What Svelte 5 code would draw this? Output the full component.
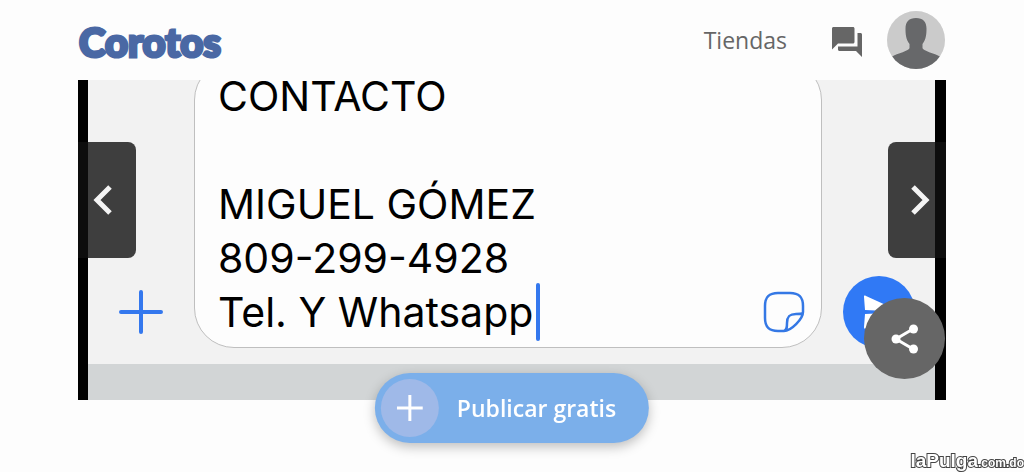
<script lang="ts">
	interface Line {
		text: string;
		caret?: boolean;
	}

	const lines: Line[] = [
		{ text: 'CONTACTO' },
		{ text: '' },
		{ text: 'MIGUEL GÓMEZ' },
		{ text: '809-299-4928' },
		{ text: 'Tel. Y Whatsapp', caret: true }
	];
</script>

<header>
	<a class="logo" href="#inicio">Corotos</a>
	<nav>
		<a class="stores" href="#tiendas">Tiendas</a>
		<a class="chat" href="#mensajes" aria-label="Mensajes">
			<svg viewBox="2 2 20 20" width="30" height="30" aria-hidden="true">
				<path
					fill="#666"
					d="M21 6h-2v9H6v2c0 .55.45 1 1 1h11l4 4V7c0-.55-.45-1-1-1zm-4 6V3c0-.55-.45-1-1-1H3c-.55 0-1 .45-1 1v14l4-4h10c.55 0 1-.45 1-1z"
				/>
			</svg>
		</a>
		<button class="avatar" aria-label="Mi cuenta">
			<svg viewBox="0 0 58 58" width="58" height="58" aria-hidden="true">
				<rect width="58" height="58" fill="#cbcbcb" />
				<path
					fill="#67686a"
					d="M29 7c-7 0-10.500 4-10.500 10.500 0 6 .5 11 4 15.500v4c0 3-12 5-18 9v12h49V46c-6-4-18-6-18-9v-4c3.500-4.500 4-9.500 4-15.500C39.500 11 36 7 29 7z"
				/>
			</svg>
		</button>
	</nav>
</header>

<main class="gallery">
	<figure>
		<div class="composer">
			<div class="side">
				<svg viewBox="0 0 44 44" width="44" height="44" aria-hidden="true">
					<path d="M22 2v40M2 22h40" stroke="#3478ee" stroke-width="4" stroke-linecap="round" />
				</svg>
			</div>
			<div class="bubble">
				<div class="message">
					{#each lines as line}
						<p>
							{line.text}
							{#if line.caret}<span class="caret"></span>{/if}
						</p>
					{/each}
				</div>
				<svg class="sticker" viewBox="0 0 42 42" width="42" height="42" aria-hidden="true">
					<path
						d="M15 2h12c9 0 13 4 13 13v6c0 7-12 19-19 19h-6C6 40 2 36 2 27V15C2 6 6 2 15 2z M40 22c-1 1-3 1-7 1-7 0-9 3-9 9 0 4 0 7-3 8"
						fill="none"
						stroke="#3478e5"
						stroke-width="2.500"
						stroke-linejoin="round"
					/>
				</svg>
			</div>
			<div class="side">
				<svg viewBox="0 0 72 72" width="72" height="72" aria-hidden="true">
					<circle cx="36" cy="36" r="36" fill="#3079f5" />
					<path fill="#fff" d="M23 20c-2-1-2 0-2 1l1 13 22 1v2l-22 1-1 13c0 2 1 2 2 1l33-15c1-1 1-1 0-2z" />
				</svg>
			</div>
		</div>
		<div class="keyboard"></div>
	</figure>

	<button class="arrow prev" aria-label="Anterior">
		<svg viewBox="0 0 20 32" width="20" height="32" aria-hidden="true">
			<path d="M17 3L4 16l13 13" fill="none" stroke="#f4f4f4" stroke-width="5" />
		</svg>
	</button>
	<button class="arrow next" aria-label="Siguiente">
		<svg viewBox="0 0 20 32" width="20" height="32" aria-hidden="true">
			<path d="M3 3l13 13L3 29" fill="none" stroke="#f4f4f4" stroke-width="5" />
		</svg>
	</button>
	<button class="share" aria-label="Compartir">
		<svg viewBox="0 0 28 30" width="28" height="30" aria-hidden="true">
			<path d="M22 5L5 15l17 10" fill="none" stroke="#fff" stroke-width="3" />
			<g fill="#fff">
				<circle cx="22.500" cy="5" r="4.500" />
				<circle cx="5" cy="15" r="4.500" />
				<circle cx="22.500" cy="25" r="4.500" />
			</g>
		</svg>
	</button>
</main>

<button class="publish">
	<span class="plus">
		<svg viewBox="0 0 26 26" width="26" height="26" aria-hidden="true">
			<path d="M13 0v26M0 13h26" stroke="#fff" stroke-width="3" />
		</svg>
	</span>
	<span>Publicar gratis</span>
</button>

<div class="watermark">laPulga<small>.com.do</small></div>

<style>
	:global(body) {
		background: #fdfdfd;
		font-family: 'Open Sans', sans-serif;
	}

	button {
		padding: 0;
		border: 0;
		font: inherit;
		cursor: pointer;
	}

	svg {
		display: block;
	}

	a {
		color: inherit;
		text-decoration: none;
	}

	header {
		display: flex;
		align-items: center;
		justify-content: space-between;
		height: 80px;
		padding: 0 79px;
	}

	.logo {
		padding-top: 4px;
		color: #4a68a4;
		font: 900 40px/44px Lato, sans-serif;
		-webkit-text-stroke: 3px #4a68a4;
	}

	nav {
		display: flex;
		align-items: center;
	}

	.stores {
		color: #666;
		font-size: 23px;
		line-height: 32px;
	}

	.chat {
		padding-top: 4px;
		margin: 0 25px 0 45px;
	}

	.avatar {
		overflow: hidden;
		border-radius: 50%;
	}

	.gallery {
		position: relative;
		height: 320px;
		margin: 0 78px;
		overflow: hidden;
	}

	figure {
		display: flex;
		flex-direction: column;
		justify-content: flex-end;
		box-sizing: border-box;
		height: 100%;
		margin: 0;
		padding: 0 11px 0 10px;
		background: #000;
	}

	.composer {
		display: grid;
		flex: none;
		grid-template-columns: 106px 1fr 113px;
		align-items: end;
		padding-bottom: 16px;
		background: #f2f2f2;
	}

	.side {
		display: flex;
		align-items: center;
		justify-content: center;
		height: 72px;
	}

	.bubble {
		display: flex;
		align-items: flex-end;
		justify-content: space-between;
		padding: 8px 16px 8px 23px;
		border: 1px solid #bfbfbf;
		border-radius: 40px;
		background: #fdfdfd;
	}

	.message {
		color: #000;
		font: 41px/54px Inter, sans-serif;
	}

	.message p {
		display: flex;
		align-items: center;
		gap: 3px;
		height: 54px;
		margin: 0;
		white-space: nowrap;
	}

	.caret {
		width: 4px;
		height: 58px;
		border-radius: 2px;
		background: #3478ee;
	}

	.sticker {
		margin-bottom: 6px;
	}

	.keyboard {
		flex: none;
		height: 36px;
		background: #d2d5d6;
	}

	.arrow {
		position: absolute;
		top: 62px;
		display: flex;
		align-items: center;
		box-sizing: border-box;
		width: 58px;
		height: 116px;
		background: rgb(16 16 16 / 80%);
	}

	.prev {
		left: 0;
		padding-left: 15px;
		border-radius: 0 8px 8px 0;
	}

	.next {
		right: 0;
		justify-content: flex-end;
		padding-right: 16px;
		border-radius: 8px 0 0 8px;
	}

	.share {
		position: absolute;
		right: 1px;
		bottom: 21px;
		display: flex;
		align-items: center;
		justify-content: center;
		width: 81px;
		height: 81px;
		border-radius: 50%;
		background: #666;
	}

	.publish {
		position: fixed;
		bottom: 29px;
		left: 50%;
		display: flex;
		align-items: center;
		gap: 18px;
		padding: 6px 33px 6px 6px;
		border-radius: 35px;
		background: #7bafea;
		box-shadow: 0 4px 12px rgb(0 0 0 / 25%);
		color: #fff;
		font-size: 23px;
		font-weight: 600;
		line-height: 32px;
		white-space: nowrap;
		transform: translateX(-50%);
	}

	.plus {
		display: flex;
		align-items: center;
		justify-content: center;
		width: 58px;
		height: 58px;
		border-radius: 50%;
		background: #9fb9e8;
	}

	.watermark {
		position: fixed;
		right: 0;
		bottom: 0;
		color: #fff;
		font: bold 19px/18px 'Liberation Sans Narrow', 'Liberation Sans', sans-serif;
		-webkit-text-stroke: 2px #444;
		paint-order: stroke fill;
	}

	.watermark small {
		font-size: 12px;
	}
</style>
